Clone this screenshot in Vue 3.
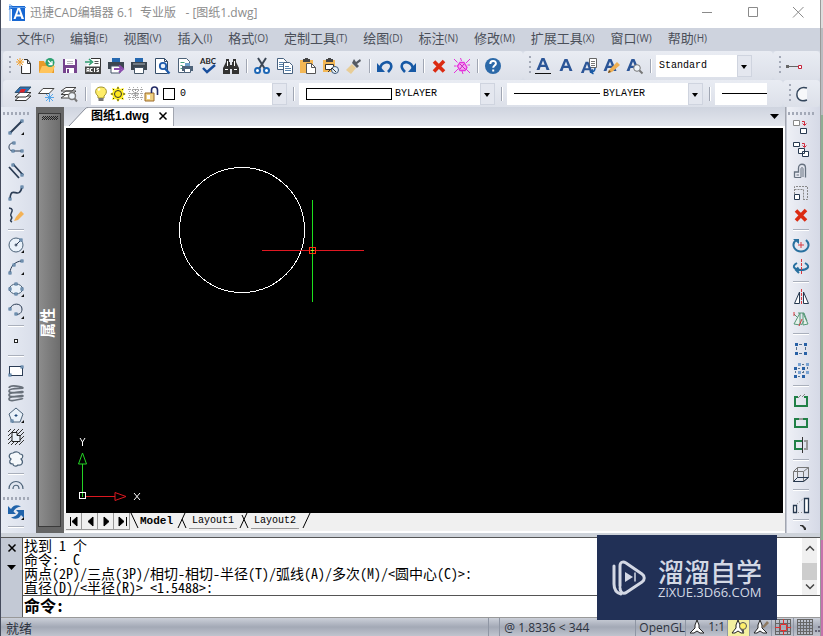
<script setup>
import { ref } from 'vue'

const A = (x = 8, y = 13, s = 15) =>
  `<path transform="translate(${x - s / 2} ${y - s * 0.8}) scale(${s / 15})" fill="#2b5597" fill-rule="evenodd" d="M6 0h3l5 12h-3l-1-3H5l-1 3H1zM5.800 6.800h3.400L7.500 2.400z"/>`
const tri = '<path d="M16 13v3h-3z" fill="#111"/>'
const node = (x, y) => `<rect x="${x - 1}" y="${y - 1}" width="2" height="2" fill="#fff" stroke="#3f6a93"/>`
const dark = 'fill="none" stroke="#2c3d55"'

const icons = {
  new: '<path d="M6.500 2.500h5l3 3v10h-8z" fill="#fff"/><path d="M5.500 8v7.500h9V5.500l-3-4H8M11.500 1.500v4h3" fill="none" stroke="#333"/><path d="M4 0v8M0 4h8M1 1l6 6M7 1L1 7" stroke="#f0a030"/>',
  open: '<path d="M0 3h5l1 2h9v10H0z" fill="#e89b2a"/><path d="M3 8h13l-3 7H0z" fill="#ffc45c"/><circle cx="11" cy="4.500" r="4.500" fill="#2ba172"/><path d="M9 2.500l4 4M13 3v3.500H9.500" stroke="#fff" fill="none" stroke-width="1.300"/>',
  save: '<path d="M1 1h13l1 1v13H1z" fill="#76438d"/><path d="M3 1h10v6H3zM4 10h8v5H4z" fill="#fff"/><path d="M5 3.500h6M5 5.500h6" stroke="#bbb"/><path d="M5 11h2v4H5z" fill="#76438d"/>',
  acis: '<path d="M6 .500h9.500v15H.500V9" fill="#fff" stroke="#333"/><path d="M0 8.500h16v7H0z" fill="#444"/><path d="M2 14v-3.500h2V14M2 12.500h2M7.500 10.500h-2v3h2M9.500 10v4M14 10.500h-2v1.500h1.500v1.500h-2" stroke="#fff" fill="none"/><path d="M0 4h6M4 1l3.500 3L4 7" stroke="#2f9c70" stroke-width="1.600" fill="none"/><path d="M9.500 3.500h4M9.500 5.500h4" stroke="#555"/>',
  export: '<path d="M4 0h8v4H4z" fill="#2568b0"/><path d="M0 4h16v7H0z" fill="#3c4650"/><path d="M3 8h9v7H3z" fill="#fff" stroke="#456"/><path d="M6 11h7M11 7.500l4 3.500-4 3.500" fill="none" stroke="#8b4bae" stroke-width="2"/>',
  print: '<path d="M4 0h8v4H4z" fill="#2568b0"/><path d="M0 4h16v8H0z" fill="#3c4650"/><path d="M2 6h12" stroke="#a8b0b8"/><path d="M3.500 9.500h9v6h-9z" fill="#fff" stroke="#456"/>',
  preview: '<path d="M1.500 .500h9l3 3v12h-12z" fill="#fff" stroke="#344c68"/><path d="M10.500 .500v3h3" fill="none" stroke="#344c68"/><circle cx="9" cy="8" r="3.200" fill="#eaf2fb" stroke="#1d5bad" stroke-width="1.800"/><path d="M11 10.500l4.500 5" stroke="#1d5bad" stroke-width="2.200"/>',
  publish: '<path d="M1.500 .500h8l3 3v11h-11z" fill="#fff" stroke="#4d6279"/><path d="M3.500 4.500h4M3.500 7.500h2M3.500 10.500h2" stroke="#49a080"/><path d="M8 5h5v3H8z" fill="#6e9fc8"/><path d="M5 8h11v5H5z" fill="#4d6279"/><path d="M7.500 10.500h6v4h-6z" fill="#fff" stroke="#4d6279"/>',
  spell: '<path d="M3 10l4 4 8-7" stroke="#184e9c" stroke-width="2.400" fill="none"/><text x="8" y="6" text-anchor="middle" font-family="Lato, sans-serif" font-weight="700" font-size="8" fill="#222">ABC</text>',
  find: '<path d="M3 1h3v3h1V7h2V4h1V1h3v3l3 6v6H9v-5H7v5H0v-6l3-6z" fill="#333"/><path d="M2 11.500h3M11 11.500h3M4.500 3v5M11.500 3v5" stroke="#fff"/>',
  cut: '<path d="M4 0l7 11M12 0L5 11" stroke="#3b4654" stroke-width="2"/><circle cx="3.500" cy="12.500" r="2.500" fill="#fff" stroke="#1c66b5" stroke-width="2"/><circle cx="12.500" cy="12.500" r="2.500" fill="#fff" stroke="#1c66b5" stroke-width="2"/>',
  copy: '<path d="M.500 .500h6l3 3v8h-9z" fill="#fff" stroke="#47617f"/><path d="M2 4.500h4M2 6.500h4M2 8.500h4" stroke="#5783ad"/><path d="M6.500 4.500h6l3 3v8h-9z" fill="#fff" stroke="#47617f"/><path d="M8 8.500h4M8 10.500h6M8 12.500h6" stroke="#5783ad"/>',
  paste: '<path d="M0 2h13v13H0z" fill="#f3b755"/><path d="M3 1h7v3H3z" fill="#444"/><path d="M5 0h3v2H5z" fill="#444"/><path d="M6.500 5.500h5l4 4v6h-9z" fill="#fff" stroke="#555"/><path d="M11.500 5.500v4h4" fill="none" stroke="#555"/>',
  pasteblock: '<path d="M0 2h12v12H0z" fill="#f3b755"/><path d="M3 1h7v3H3zM5 0h3v2H5z" fill="#444"/><path d="M2.500 6.500h8v5h-8z" fill="#fff" stroke="#333"/><circle cx="12" cy="12" r="3.500" fill="#e5f0fa" stroke="#3c5877"/><path d="M5 14l4-4 4 4" fill="none" stroke="#333"/>',
  brush: '<path d="M0 12l6-6 4 4-5 6z" fill="#e8cd96"/><path d="M6 5l5 5 2-2-2-2 4-3-1-2-4 3-2-3z" fill="#555b63"/>',
  undo: '<path d="M0 5v9h8z" fill="#1759a5"/><path d="M3 11C4 3 14 2 14.300 8c.200 2.500-1.300 4-3.300 6" fill="none" stroke="#1759a5" stroke-width="2.600"/>',
  redo: '<path d="M16 5v9H8z" fill="#1759a5"/><path d="M13 11C12 3 2 2 1.700 8c-.200 2.500 1.300 4 3.300 6" fill="none" stroke="#1759a5" stroke-width="2.600"/>',
  x: '<path d="M3 3.500l10 10M13 3L3 13.500" stroke="#db2b12" stroke-width="3.600"/>',
  explode: '<path d="M6 4.500h4l3 5-2 3H6L3.500 8z" fill="#f7a6f2" stroke="#e432db" stroke-width="1.300"/><path d="M0 1l3.500 3.500M16 1l-4 4M0 15l4-4M16 15l-4-4M6.500 0l1 3M0 8h2.500M9 16l-1-3M16 7h-2.500" stroke="#e432db"/><path d="M6 6l5 5M10 6l-4 5" stroke="#c22bc0"/>',
  help: '<circle cx="8" cy="8" r="8" fill="#2c69a8"/><path d="M5.300 6c0-4 5.600-4 5.600-.500 0 2-2.700 2-2.700 4.200M8.200 11.500v2" fill="none" stroke="#fff" stroke-width="2"/>',
  aunder: A(8, 12, 15) + '<path d="M0 15.500h16" stroke="#111"/>',
  a: A(8, 13, 15),
  alist: '<path d="M8.500 .500h7v9h-7z" fill="#fff" stroke="#666"/><path d="M10 3.500h4M10 5.500h4M10 7.500h4" stroke="#777"/>' + A(6, 15, 14) + '<path d="M14 10c0 3-1 4-4 4M12 11.500L9.500 14l3 2" fill="none" stroke="#1759a5" stroke-width="1.500"/>',
  apencil: A(6, 13, 15) + '<path d="M4 15l1-3 8-8 3 3-8 7z" fill="#efaf52"/><path d="M4 15l1-3 2 2z" fill="#6b4a20"/>',
  azoom: A(6, 13, 15) + '<circle cx="10" cy="10" r="3.300" fill="#edf3f9" stroke="#777"/><path d="M12.500 12.500l3 3" stroke="#777" stroke-width="2"/>',
  dim: '<path d="M1 8.500h12" stroke="#666"/><path d="M0 7h3v3H0z" fill="#666"/><path d="M12.500 7.500h3v3h-3z" fill="#fff" stroke="#c6223a"/>',
  layers: '<path d="M5 10h11l-5 4.500H0z" fill="#fff" stroke="#333"/><path d="M5 6.500h11L11 11H0z" fill="#fff" stroke="#333"/><path d="M5 1h11l-5 5.500H0z" fill="#2b70b5" stroke="#31516b"/><path d="M6 3h5l-2 3.500H4z" fill="#d8252c"/>',
  layernew: '<path d="M5 2.500h11L11 7.500H.500z" fill="#fff" stroke="#444"/><path d="M11.500 7v9M7 11.500h9M8 8l7 7M15 8l-7 7" stroke="#56a5e8"/>',
  layerfind: '<path d="M5 8.500h10l-4 3.500H0zM5 5h10l-4 3.500H0zM5 1.500h10L11 5H0z" fill="#fff" stroke="#444"/><circle cx="11" cy="10" r="3.500" fill="#eef4fa" stroke="#777" stroke-width="1.400"/><path d="M13.500 12.500L16 15.500" stroke="#777" stroke-width="2"/>',
  bulb: '<path d="M8 1c-6 0-7 6-3 9v2h6v-2c4-3 3-9-3-9z" fill="#ffed68" stroke="#a29430"/><path d="M5.500 12h5v3h-5z" fill="#777"/><path d="M5 4l2-1" stroke="#fff" stroke-width="2"/>',
  sun: '<path d="M8 0l2 3 4-1-1 4 3 2-3 2 1 4-4-1-2 3-2-3-4 1 1-4-3-2 3-2-1-4 4 1z" fill="#ffee22"/><circle cx="8" cy="8" r="3.500" fill="#ffe81d" stroke="#333"/><path d="M8 1v2M8 13v2M1 8h2M13 8h2M3 3l1 1M12 12l1 1M3 13l1-1M12 4l1-1" stroke="#333"/>',
  vpfreeze: '<path d="M2.500 1v14M6.500 1v14M10.500 1v14M14.500 1v14M1 3.500h15M1 7.500h15M1 11.500h15" stroke="#aaa" stroke-dasharray="1 1"/><path d="M5 4l7 8M12 4l-7 8M8.500 3v10M4 8h9" stroke="#999" stroke-dasharray="2 1"/>',
  lock: '<path d="M1 7h9v8H1z" fill="#eed083" stroke="#9c6a28"/><path d="M7.500 7V4c0-4 6-4 6 0v5" fill="none" stroke="#222a65" stroke-width="1.600"/><path d="M3 9h3v4H3z" fill="#fff"/>',
  swatch: '<rect x="2.500" y="2.500" width="11" height="11" fill="#fff" stroke="#000"/>',
  arcc: '<path d="M11 2c-13-4-14 17 0 12" stroke="#34465c" stroke-width="1.400" fill="#f7f8fa"/>',
  line: `<path d="M2 14L14 2" ${dark} stroke-width="2"/>` + node(2, 14) + node(14, 2) + tri,
  pline: `<path d="M6 2C0 1-1 10 5 10h9" ${dark}/>` + node(6, 2) + node(5, 10) + node(14, 10) + tri,
  mline: `<path d="M1 4l10 11M5 1l10 11" ${dark} stroke-width="1.800"/>` + node(5, 2) + node(14, 12),
  spline: `<path d="M2 14c1-15 9 2 12-12" ${dark} stroke-width="1.600"/>` + node(2, 14) + node(14, 2),
  sketch: `<path d="M1 1c7 1 0 6 2 8 3 3-3 4 1 6" ${dark} stroke-width="1.500"/><path d="M6 14l2-4 5-6 3 3-6 6z" fill="#f3b256"/>`,
  circle: `<circle cx="8" cy="8" r="7" fill="#e9f1f9" stroke="#4d6379"/><path d="M8 8l5-5M6.500 8h3M8 6.500v3" ${dark}/>` + node(13, 3) + tri,
  arc: `<path d="M2 14C2 8 7 2 14 2" ${dark}/>` + node(2, 14) + node(6, 6) + node(14, 2) + tri,
  ellipse: `<ellipse cx="8" cy="8" rx="6.500" ry="5" fill="#e9f1f9" stroke="#4d6379"/>` + node(2, 8) + node(14, 8) + node(8, 3) + node(8, 13) + tri,
  earc: `<path d="M2 6c2-7 12-6 12 0 0 4-3 6-6 5" ${dark}/>` + node(2, 6) + node(8, 11) + tri,
  point: '<rect x="6.500" y="6.500" width="3" height="3" fill="#fff" stroke="#222"/>',
  rect: '<rect x="1.500" y="3.500" width="13" height="9" fill="#fff" stroke="#2c3d55"/>' + node(2, 12) + node(14, 4),
  helix: '<path d="M1 3c1-4 14-1 14 0s-14-1-14 3 14-1 14 1-14-1-14 3 14-1 14 1-14-1-14 3 13-1 14 0" fill="none" stroke="#68707a" stroke-width="1.700"/>',
  polygon: '<path d="M8 1l7 6-3 8H4L1 7z" fill="#e9f1f9" stroke="#4d6379"/><path d="M8 7v3M6.500 8.500h3" stroke="#234a7a"/>' + node(4, 14) + tri,
  hatch: '<path d="M0 3l3-3M0 7l7-7M0 11L11 0M0 15L15 0M3 16L16 3M7 16l9-9M11 16l5-5" stroke="#333"/><path d="M4 3.500h5v3h3v6H4z" fill="#e9f1f9" stroke="#222"/>',
  cloud: '<path d="M5 2c3-2 6-1 7 1 4 0 3 4 1 5 3 3 1 7-3 6-2 2-5 1-5-1-4 0-4-3-2-5-3-2-2-6 2-6z" fill="#f5f8fb" stroke="#4d6379" stroke-width="1.200"/>',
  donut: '<path d="M1 11C1 1 15 1 15 11M5 11c0-5 6-5 6 0" fill="none" stroke="#4d6379" stroke-width="1.200"/>',
  refresh: '<path d="M0 2v8h8L5.500 7.500C7 4.500 9 3.500 13 2.500 9 0 5 1 3 5z" fill="#2063aa"/><path d="M16 14V6H8l2.500 2.500C9 11.500 7 12.500 3 13.500 7 16 11 15 13 11z" fill="#2063aa"/>' + tri,
  copyobj: '<path d="M.500 1.500h6v5h-6z" fill="#fff" stroke="#888"/><path d="M7.500 9.500h6v5h-6z" fill="#fff" stroke="#26384f"/><path d="M9 2.500h2.500V6M9.500 4.500l2 2 2-2" fill="none" stroke="#cf2a3c"/>',
  copymulti: '<path d="M.500 1.500h6v4h-6zM5.500 7.500h6v5h-6zM9.500 10.500h6v5h-6z" fill="#fff" stroke="#26384f"/><path d="M9 2.500h2.500V6M9.500 4.500l2 2 2-2" fill="none" stroke="#cf2a3c"/>',
  offset: '<path d="M1.500 14.500V9h4V5c0-5 7-5 7 0v9.500" fill="none" stroke="#66717f" stroke-width="1.300"/><path d="M1.500 14.500H8V6c0-2 2-2 2 0v8M3.500 12h2.500" fill="none" stroke="#66717f"/>',
  scale: '<path d="M1.500 9V1.500h13v13H9M1.500 4.500h9V15" fill="none" stroke="#888" stroke-dasharray="2 1"/><path d="M1.500 9.500h5v5h-5z" fill="#fff" stroke="#26384f"/>',
  rotate: '<path d="M3 3c-6 6 0 11.500 5 11.500S19 9 13 3" fill="none" stroke="#28709f" stroke-width="2"/><path d="M0 2h6v5z" fill="#28709f"/><path d="M8 5v6M5 8h6" stroke="#d83a40"/>',
  rotate3d: '<path d="M4 4c-7 4-1 7 4 7s11-3 4-7M5.500 8.500L3 11l3 3" fill="none" stroke="#28709f" stroke-width="2"/><path d="M8.500 0v16" stroke="#d83a40" stroke-dasharray="3 1"/>',
  mirror: '<path d="M6.500 3v11.500h-5zM10.500 3v11.500h5z" fill="#fff" stroke="#26384f"/><path d="M8.500 0v16" stroke="#d83a40" stroke-dasharray="3 1"/>',
  mirror3d: '<path d="M7 2v12l-6-1zM10 2v12l5-1z" fill="#e6f1eb" stroke="#579777"/><path d="M5 2h6l3 8M1 3l3 3M11 10l-3 4" fill="none" stroke="#579777"/><path d="M1 1v4M9 8l-3 7" stroke="#d83a40"/>',
  array: '<path d="M2 2h3v3H2zM11 2h3v3h-3zM2 11h3v3H2zM11 11h3v3h-3z" fill="#2861a6"/><path d="M6 3.500h4M6 12.500h4M3.500 6v4M12.500 6v4" stroke="#58718c" stroke-dasharray="3 1"/>',
  array3d: '<path d="M5 0h3v3H5zM13 0h3v3h-3zM13 8h3v3h-3zM5 8h3v3H5z" fill="#79a2d1"/><path d="M1 4h3v3H1zM9 4h3v3H9zM1 12h3v3H1zM9 12h3v3H9z" fill="#2861a6"/><path d="M9 1.500h3M5 5.500h3M9 9.500h3M5 13.500h3M2.500 8v3M10.500 8v3M14.500 4v3" stroke="#58718c" stroke-dasharray="2 1"/>',
  breakp: '<path d="M5 4H2v9h12V4h-3" fill="none" stroke="#208047" stroke-width="2"/><path d="M5 5l3-3M9 4l3-3" stroke="#888"/>',
  join: '<path d="M6 4H2v8h12V4h-4" fill="none" stroke="#208047" stroke-width="2"/><path d="M6 4h4" stroke="#999" stroke-width="2"/>',
  trim: '<path d="M9 4H2v8h7" fill="none" stroke="#208047" stroke-width="2"/><path d="M11 4h3v8h-3" fill="none" stroke="#999" stroke-width="2"/><path d="M9.500 0v16" stroke="#333"/>',
  box: '<path d="M.500 4.500h10v10h-10zM4.500 .500h11v10h-11zM.500 4.500l4-4M10.500 4.500l5-4M.500 14.500l4-4M10.500 14.500l5-4" fill="none" stroke="#777"/><path d="M.500 14.500l4-4h11l-5 4z" fill="none" stroke="#26384f"/>',
  stretch: '<path d="M.500 8.500h3v7h-3zM11.500 1.500h4v14h-4z" fill="#fff" stroke="#26384f" stroke-width="1.300"/><path d="M4 7l7-6M5 15.500h6" stroke="#888" stroke-dasharray="1 2"/>',
  fillet: '<path d="M7 1h3l3 3v2h-2c0-2-2-4-4-4z" fill="#333"/>',
}

const file = [
  ['new', '新建'], ['open', '打开'], ['save', '保存'], ['acis', 'ACIS'], ['export', '输出'], ['print', '打印'],
  ['preview', '预览'], ['publish', '发布'], ['spell', '拼写'], ['find', '查找'], null,
  ['cut', '剪切'], ['copy', '复制'], ['paste', '粘贴'], ['pasteblock', '粘贴为块'], ['brush', '特性匹配'], null,
  ['undo', '撤销'], ['redo', '重做'], null, ['x', '删除'], ['explode', '分解'], null, ['help', '帮助'],
]
const text = [['aunder', '文字'], ['a', '多行文字'], ['alist', '文字样式'], ['apencil', '编辑文字'], ['azoom', '查找文字'], null]
const layer = [['layers', '图层'], ['layernew', '新建图层'], ['layerfind', '图层浏览'], null]
const layerState = ['bulb', 'sun', 'vpfreeze', 'lock', 'swatch']
const draw = [
  ['line', '直线'], ['pline', '多段线'], ['mline', '多线'], ['spline', '样条'], ['sketch', '徒手画'], null,
  ['circle', '圆'], ['arc', '圆弧'], ['ellipse', '椭圆'], ['earc', '椭圆弧'], null, ['point', '点'], null,
  ['rect', '矩形'], ['helix', '螺旋'], ['polygon', '多边形'], ['hatch', '填充'], ['cloud', '云线'], null,
]
const modify = [
  ['copyobj', '复制对象'], ['copymulti', '多重复制'], ['offset', '偏移'], ['scale', '缩放'], ['x', '删除'], null,
  ['rotate', '旋转'], ['rotate3d', '三维旋转'], null, ['mirror', '镜像'], ['mirror3d', '三维镜像'], null,
  ['array', '阵列'], ['array3d', '三维阵列'], null, ['breakp', '打断'], ['join', '合并'], ['trim', '修剪'], null,
  ['box', '长方体'], null, ['stretch', '拉伸'], null,
]
const menus = [
  ['文件', 'F'], ['编辑', 'E'], ['视图', 'V'], ['插入', 'I'], ['格式', 'O'], ['定制工具', 'T'], ['绘图', 'D'],
  ['标注', 'N'], ['修改', 'M'], ['扩展工具', 'X'], ['窗口', 'W'], ['帮助', 'H'],
]
const log = [
  '找到 1 个',
  '命令:  C',
  '两点(2P)/三点(3P)/相切-相切-半径(T)/弧线(A)/多次(M)/<圆中心(C)>:',
  '直径(D)/<半径(R)> <1.5488>:',
]
const command = ref('')
const navs = [
  ['首个布局', 'M3.500 3v9M10 3v9L5 7.500z'],
  ['上一布局', 'M10 3v9L5 7.500z'],
  ['下一布局', 'M5 3v9l5-4.500z'],
  ['末个布局', 'M4 3v9l5-4.500zM11.500 3v9'],
]
</script>

<template>
  <div class="desktop">
    <div class="app">
      <header class="title">
        <svg class="logo" width="17" height="17" viewBox="0 0 17 17" aria-hidden="true">
          <path d="M0 2h16v15H3V5H0z" fill="#1767d2" />
          <path d="M8.500 4h2.500l4 11h-2.500l-.800-2.500H7.500L6.600 15H4.500zM8.200 10.500h3L9.700 6z" fill="#fff" fill-rule="evenodd" />
          <path d="M1 0v17M0 3.500h17M3 1L0 6" stroke="#5b9bea" fill="none" />
        </svg>
        <h1>迅捷CAD编辑器 6.1 &nbsp;专业版 &nbsp; - [图纸1.dwg]</h1>
        <div class="winbtns">
          <button aria-label="最小化"><svg width="11" height="11"><path d="M0 5.500h10" /></svg></button>
          <button aria-label="最大化"><svg width="11" height="11"><path d="M.500 .500h9v9h-9z" /></svg></button>
          <button aria-label="关闭"><svg width="11" height="11"><path d="M0 0l10.500 10.500M10.500 0L0 10.500" /></svg></button>
        </div>
      </header>

      <nav class="menu">
        <button v-for="m in menus" :key="m[1]">{{ m[0] }}<small>({{ m[1] }})</small></button>
      </nav>

      <div class="bar">
        <div class="strip grow">
          <i class="grip"></i>
          <template v-for="(t, i) in file" :key="i">
            <button v-if="t" class="tool" :aria-label="t[1]"><svg viewBox="0 0 16 16" v-html="icons[t[0]]"></svg></button>
            <i v-else class="sep"></i>
          </template>
        </div>
        <div class="strip textstrip">
          <i class="grip"></i>
          <template v-for="(t, i) in text" :key="i">
            <button v-if="t" class="tool" :aria-label="t[1]"><svg viewBox="0 0 16 16" v-html="icons[t[0]]"></svg></button>
            <i v-else class="sep"></i>
          </template>
          <div class="combo style">
            <select aria-label="文字样式"><option>Standard</option></select><i class="arrow"></i>
          </div>
        </div>
        <div class="strip last">
          <i class="grip"></i>
          <button class="tool" aria-label="标注"><svg viewBox="0 0 16 16" v-html="icons.dim"></svg></button>
        </div>
      </div>

      <div class="bar second">
        <div class="strip grow props">
          <template v-for="(t, i) in layer" :key="i">
            <button v-if="t" class="tool" :aria-label="t[1]"><svg viewBox="0 0 16 16" v-html="icons[t[0]]"></svg></button>
            <i v-else class="sep mid"></i>
          </template>
          <div class="combo wide">
            <span class="states"><svg v-for="s in layerState" :key="s" viewBox="0 0 16 16" v-html="icons[s]"></svg></span>
            <select aria-label="图层"><option>0</option></select><i class="arrow"></i>
          </div>
          <i class="sep big"></i>
          <div class="combo wide">
            <i class="swatch"></i>
            <select aria-label="颜色"><option>BYLAYER</option></select><i class="arrow"></i>
          </div>
          <i class="sep big"></i>
          <div class="combo wide">
            <i class="rule"></i>
            <select aria-label="线型"><option>BYLAYER</option></select><i class="arrow"></i>
          </div>
          <i class="sep big"></i>
          <div class="combo weight"><i class="rule"></i></div>
        </div>
        <div class="strip short">
          <i class="grip"></i>
          <button class="tool" aria-label="圆弧"><svg viewBox="0 0 16 16" v-html="icons.arcc"></svg></button>
        </div>
      </div>

      <main class="main">
        <aside class="rail">
          <i class="hgrip"></i>
          <template v-for="(t, i) in draw" :key="i">
            <button v-if="t" class="tool" :aria-label="t[1]"><svg viewBox="0 0 16 16" v-html="icons[t[0]]"></svg></button>
            <i v-else class="hsep"></i>
          </template>
          <button class="tool cut" aria-label="圆环"><svg viewBox="0 0 16 16" v-html="icons.donut"></svg></button>
          <i class="hgrip"></i>
          <button class="tool" aria-label="重画"><svg viewBox="0 0 16 16" v-html="icons.refresh"></svg></button>
          <i class="hsep"></i>
        </aside>

        <aside class="palette"><div class="inner"><i class="dots"></i><span>属性</span></div></aside>

        <section class="doc">
          <div class="tabs">
            <svg class="slope" width="19" height="19" viewBox="0 0 19 19" aria-hidden="true"><path d="M0 19L16 2q1-1.500 3-1.500V19z" fill="#fff" /><path d="M0 19L16 2q1-1.500 3-1.500" fill="none" stroke="#8a8f9a" /></svg>
            <div class="tab">图纸1.dwg
              <button aria-label="关闭图纸"><svg width="8" height="8"><path d="M.500 .500l7 7M7.500 .500l-7 7" stroke="#000" stroke-width="1.500" /></svg></button>
            </div>
            <button class="list" aria-label="图纸列表"><svg width="9" height="5"><path d="M0 0h9L4.500 5z" /></svg></button>
          </div>
          <div class="canvas">
            <svg width="320" height="190" viewBox="0 0 320 190" fill="none">
              <circle cx="176" cy="102" r="62.500" stroke="#fff" shape-rendering="crispEdges" />
              <rect x="196" y="122" width="102" height="1" fill="#e01822" />
              <rect x="246" y="72" width="1" height="102" fill="#1de01d" />
              <rect x="243.500" y="119.500" width="6" height="6" stroke="#ff3010" />
              <path d="M245 122.500h3" stroke="#e8d020" />
            </svg>
            <svg width="90" height="80" viewBox="0 0 90 80" fill="none">
              <path d="M16.500 64V26" stroke="#24d324" />
              <path d="M16.500 20l4 11h-8z" stroke="#24d324" fill="#000" />
              <path d="M20 63.500h30" stroke="#dc1820" />
              <path d="M60 63.500l-11-4v8z" stroke="#dc1820" fill="#000" />
              <rect x="13.500" y="59.500" width="6" height="6" stroke="#fff" />
              <path d="M14 5l2.500 4L19 5M16.500 9v4M68 60l6 7M74 60l-6 7" stroke="#fff" />
            </svg>
          </div>
          <div class="layouts">
            <button v-for="n in navs" :key="n[0]" class="nav" :aria-label="n[0]"><svg width="14" height="15"><path :d="n[1]" stroke="#000" /></svg></button>
            <svg width="9" height="16"><path d="M1 0l7 15" class="edge" /></svg>
            <button class="sheet active">Model</button>
            <svg width="14" height="16"><path d="M10 0L3 15M7 6l4 9" class="edge" /></svg>
            <button class="sheet">Layout1</button>
            <svg width="14" height="16"><path d="M10 0L3 15M5 2l6 13" class="edge" /></svg>
            <button class="sheet">Layout2</button>
            <svg width="14" height="16"><path d="M11 0L4 15" class="edge" /></svg>
          </div>
        </section>

        <aside class="rail right">
          <i class="hgrip"></i>
          <template v-for="(t, i) in modify" :key="i">
            <button v-if="t" class="tool" :aria-label="t[1]"><svg viewBox="0 0 16 16" v-html="icons[t[0]]"></svg></button>
            <i v-else class="hsep"></i>
          </template>
          <button class="tool tiny" aria-label="圆角"><svg viewBox="0 0 16 16" v-html="icons.fillet"></svg></button>
        </aside>
      </main>

      <section class="console">
        <div class="side">
          <button aria-label="关闭命令栏"><svg width="8" height="8"><path d="M.500 .500l7 7M7.500 .500l-7 7" stroke="#000" stroke-width="1.500" /></svg></button>
          <button aria-label="命令栏选项"><svg width="9" height="5"><path d="M0 0h9L4.500 5z" /></svg></button>
        </div>
        <div class="box">
          <div class="out">
            <div class="log"><p v-for="l in log" :key="l">{{ l }}</p></div>
            <div class="scroll">
              <svg width="8" height="5"><path d="M0 4.500L4 .500l4 4" /></svg>
              <i></i>
              <svg width="8" height="5"><path d="M0 .500l4 4 4-4" /></svg>
            </div>
          </div>
          <div class="prompt"><label for="cmd">命令:</label><input id="cmd" v-model="command" autocomplete="off" /></div>
        </div>
      </section>

      <footer class="status">
        <span class="ready">就绪</span>
        <i class="pane"></i>
        <span class="coord">@ 1.8336 &lt; 344</span>
        <span class="pn model">OpenGL</span>
        <button class="pn" aria-label="注释比例"><svg viewBox="0 0 16 16"><path d="M8 1l2 5v3l5 5h-4l-3-2-3 2H1l5-5V6z" fill="#fff" stroke="#222" /></svg>1:1</button>
        <button class="yellow" aria-label="注释可见性"><svg viewBox="0 0 16 16"><path d="M7 1l2 5v3l4 5h-3l-3-2-3 2H1l4-5V6z" fill="#fff" stroke="#222" /><circle cx="12" cy="7" r="3.500" fill="#fdf06a" stroke="#555" /><path d="M11 11h2v3h-2z" fill="#555" /></svg></button>
        <button aria-label="自动缩放"><svg viewBox="0 0 16 16"><path d="M7 1l2 5v3l5 5h-4l-3-2-3 2H1l4-5V6z" fill="#fff" stroke="#222" /><path d="M9 8l5-6 2 2-5 5z" fill="#8d7961" /></svg></button>
        <button aria-label="捕捉"><svg viewBox="0 0 16 16"><path d="M0 .500h16M0 4.500h16M0 12.500h16M0 15.500h16M.500 0v16M4.500 0v16M12.500 0v16M15.500 0v16" stroke="#666" /><path d="M0 8.500h5M12 8.500h4M8.500 0v5M8.500 12v4M5.500 5.500h6v6h-6z" fill="none" stroke="#e03030" /></svg></button>
        <button aria-label="栅格"><svg viewBox="0 0 16 16"><path d="M0 .500h16M0 3.500h16M0 6.500h16M0 9.500h16M0 12.500h16M0 15.500h16M.500 0v16M3.500 0v16M6.500 0v16M9.500 0v16M12.500 0v16M15.500 0v16" stroke="#666" /></svg></button>
        <svg class="resize" viewBox="0 0 5 16" aria-hidden="true"><path d="M3 7h2v2H3zM3 11h2v2H3zM0 11h2v2H0z" fill="#667" /></svg>
      </footer>

      <div class="mark">
        <svg width="34" height="36" viewBox="0 0 34 36" fill="none" stroke="#d3d8e4" stroke-linecap="round" stroke-linejoin="round">
          <path d="M2 6v18c0 6 3 9 7 10" stroke-width="3" />
          <path d="M8 26V6c0-4 3-5 6-3l16 11c3 2 3 6 0 8L15 32c-4 3-7 0-7-4" stroke-width="3" />
          <path d="M13 12v10l8-5z" fill="#d3d8e4" stroke="none" /><path d="M23 13v8" stroke-width="1.500" />
        </svg>
        <div><b>溜溜自学</b><small>ZiXUE.3D66.COM</small></div>
      </div>
    </div>
    <div class="behind"></div>
  </div>
</template>

<style>
body { background: #fff; }
</style>

<style scoped>
* { box-sizing: border-box; }
button { border: 0; padding: 0; margin: 0; background: none; color: inherit; font: inherit; display: flex; align-items: center; justify-content: center; }
i { display: block; flex: none; }
svg { display: block; flex: none; overflow: visible; }
.desktop { display: flex; height: 100vh; overflow: hidden; font: 12px/16px "Open Sans", "Noto Sans CJK SC", sans-serif; }
.app { position: relative; flex: 1; min-width: 0; display: flex; flex-direction: column; background: #ced3de; border-left: 1px solid #454b5c; }
.behind { width: 3px; background: linear-gradient(#ddd 0 28px, #b9bcc0 28px 115px, #8fae93 115px 540px, #c772ac 540px); border-left: 1px solid #999; }
.title { display: flex; align-items: center; height: 28px; background: #fff; padding: 0 0 3px 8px; color: #8c8c8c; }
h1 { flex: 1; font: inherit; margin: 0 0 0 4px; white-space: nowrap; }
.winbtns { display: flex; }
.winbtns button { width: 46px; height: 24px; }
.winbtns button:last-child { width: 44px; }
.winbtns path { stroke: #8a8a8a; fill: none; }
.menu { display: flex; gap: 16px; height: 23px; padding-left: 16px; background: #ced3de; color: #4a4f59; font-size: 13px; }
.menu button { height: 20px; white-space: nowrap; }
.menu small { font-size: 10px; }
.bar { display: flex; height: 29px; background: #d8dde7; padding-left: 2px; }
.bar.second { height: 27px; }
.strip { display: flex; align-items: center; background: linear-gradient(#e9ecf3, #dce0e9); border-radius: 4px; }
.grow { flex: 1; min-width: 0; }
.props { padding-left: 8px; }
.grip { width: 2px; height: 20px; margin: 0 1px 0 6px; background: repeating-linear-gradient(#a3a9b7 0 2px, transparent 2px 5px); }
.tool { width: 23px; height: 22px; flex: none; }
.tool svg, .states svg { width: 16px; height: 16px; }
.sep { width: 1px; height: 14px; margin: 0 3px 0 4px; background: #a0a6b3; box-shadow: 1px 0 #fff; }
.sep.mid { margin: 0 5px; }
.sep.big { margin: 0 5px 0 6px; }
.textstrip { width: 250px; }
.textstrip .grip { margin-right: 0; }
.last { width: 47px; }
.short { width: 37px; }
.combo { position: relative; display: flex; align-items: center; height: 22px; background: #fff; }
.combo.wide { width: 196px; }
.combo.style { width: 96px; margin-left: 2px; }
.combo.weight { flex: 1; margin-right: 16px; }
select { appearance: none; flex: 1; min-width: 0; height: 22px; border: 0; padding: 0 16px 0 3px; background: transparent; color: #000; font: 10px/20px "Liberation Mono", monospace; }
.arrow { position: absolute; right: 0; top: 0; width: 15px; height: 22px; background: #e4e7ef; border: 1px solid #cfd4df; pointer-events: none; }
.arrow::after { content: ""; position: absolute; left: 3px; top: 9px; border: 3px solid transparent; border-top: 4px solid #000; border-bottom: 0; }
.states { display: flex; gap: 1px; padding-left: 2px; }
.swatch { width: 86px; height: 12px; margin-left: 7px; border: 1px solid #000; }
.rule { width: 86px; height: 1px; margin-left: 7px; background: #000; }
.weight .rule { width: auto; flex: 1; }
.main { flex: 1; min-height: 0; display: flex; padding-bottom: 4px; background: #ced3da; }
.rail { width: 35px; padding: 5px 6px 0 1px; display: flex; flex-direction: column; align-items: center; background: linear-gradient(90deg, #e8ecf4, #d9deea); }
.rail.right { width: 34px; padding: 5px 5px 0 0; border-left: 1px solid #c3c7d2; background: linear-gradient(90deg, #eef0f6, #d5d9e6); }
.hgrip { width: 26px; height: 3px; margin-bottom: 1px; background: repeating-linear-gradient(90deg, #a3a9b7 0 2px, transparent 2px 4px); }
.hsep { width: 16px; height: 2px; margin: 3px 0; background: #a9afbb; border-bottom: 1px solid #fff; }
.cut { height: 19px; overflow: hidden; align-items: flex-start; }
.tiny { height: 8px; overflow: hidden; align-items: flex-start; }
.palette { width: 28px; padding: 6px 3px 6px 2px; background: #666; }
.inner { height: 100%; display: flex; flex-direction: column; align-items: center; border: 1px solid #3a3a3a; background: linear-gradient(90deg, #8c8c8c, #6d6d6d); }
.dots { width: 16px; height: 4px; margin-top: 2px; background: repeating-conic-gradient(#222 0 25%, transparent 0 50%) 0 0 / 2px 2px; }
.inner span { margin: auto 0; padding-right: 6px; color: #fff; writing-mode: sideways-lr; font: 700 15px/20px "Noto Sans CJK SC", sans-serif; }
.doc { flex: 1; min-width: 0; display: flex; flex-direction: column; border-right: 1px solid #a2a6b0; }
.tabs { display: flex; align-items: flex-end; height: 19px; padding-left: 5px; background: linear-gradient(#cfd4df, #e3e6ed); }
.tab { display: flex; align-items: center; gap: 10px; height: 19px; padding: 0 6px 2px 3px; background: #fff; border: 1px solid #a2a6b0; border-width: 1px 1px 0 0; font: 700 12px/16px "Liberation Sans", "Noto Sans CJK SC", sans-serif; }
.list { margin: 0 6px 7px auto; }
.canvas { flex: 1; min-height: 0; display: flex; flex-direction: column; justify-content: space-between; background: #000; border: solid #fff; border-width: 2px 2px 0; }
.layouts { display: flex; align-items: flex-start; height: 20px; padding-left: 2px; background: #f0f0f0; border-bottom: 2px solid #fff; }
.nav { width: 16px; height: 17px; border: 1px solid #999; border-width: 0 1px 1px 0; }
.edge { fill: none; stroke: #000; }
.sheet { height: 16px; padding: 0 3px; border-bottom: 1px solid #999; font: 10px/16px "Liberation Mono", monospace; }
.sheet.active { padding: 0 2px 0 1px; font-weight: 700; font-size: 11px; border-color: #f0f0f0; }
.console { display: flex; height: 80px; background: #c3c9d5; border-top: 1px solid #555; }
.side { width: 21px; display: flex; flex-direction: column; align-items: center; gap: 13px; padding-top: 6px; }
.box { flex: 1; min-width: 0; border-left: 1px solid #555; background: #fff; font: 14px/14px "Noto Sans Mono CJK SC", "Noto Sans CJK SC", monospace; }
.out { display: flex; height: 58px; border-bottom: 1px solid #555; }
.log { flex: 1; padding-left: 1px; }
p { margin: 0; white-space: pre; }
.scroll { width: 15px; margin-right: 3px; display: flex; flex-direction: column; align-items: center; justify-content: space-between; padding: 8px 0 6px; background: #f0f0f0; }
.scroll i { width: 15px; height: 17px; margin-top: 8px; background: #cdcdcd; }
.scroll path { fill: none; stroke: #444; stroke-width: 1.500; }
.prompt { display: flex; align-items: center; height: 18px; font-weight: 700; }
label { font-size: 16px; padding-left: 1px; }
input { flex: 1; border: 0; outline: 0; font: inherit; min-width: 0; height: 18px; background: transparent; }
.status { display: flex; align-items: center; height: 19px; padding-left: 5px; border-top: 1px solid #999; color: #2d3340; background: linear-gradient(#ccd0d9, #a3a9b6 50%, #c0c4ce); }
.status > * { height: 18px; line-height: 20px; flex: none; }
.status > .ready { flex: 1; font-size: 13px; }
.pane { width: 12px; border: 1px solid #8f96a4; border-width: 0 1px; }
.coord { width: 135px; padding-left: 4px; }
.pn { border-left: 1px solid #8f96a4; padding: 0 2px 0 3px; }
.pn.model { padding-right: 0; }
.status button { min-width: 22px; gap: 3px; }
.status button + button { border-left: 1px solid #8f96a4; }
.status svg { width: 16px; height: 16px; }
.status .resize { width: 5px; }
.status .yellow { background: #f3f0a0; }
.mark { position: absolute; right: 43px; bottom: 16px; width: 180px; height: 85px; display: flex; align-items: center; gap: 12px; padding-left: 15px; background: #213056; color: #d3d8e4; }
.mark b { display: block; font: 500 26px/28px "Noto Sans CJK SC", sans-serif; }
.mark small { display: block; font: 13px/14px "Open Sans", sans-serif; }
</style>
